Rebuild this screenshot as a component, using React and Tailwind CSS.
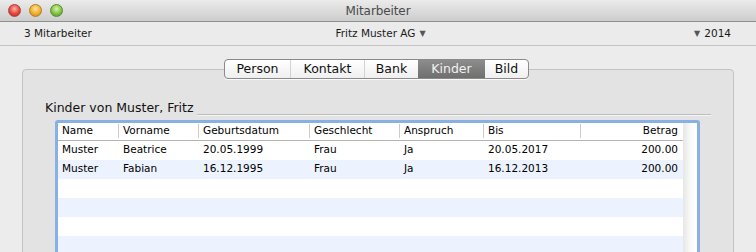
import React from 'react';

const font = { fontFamily: '"DejaVu Sans", "Liberation Sans", sans-serif' };

const columns = [
  { key: 'name', label: 'Name', width: 'w-[60px]' },
  { key: 'vorname', label: 'Vorname', width: 'w-[80px]' },
  { key: 'geburt', label: 'Geburtsdatum', width: 'w-[111px]' },
  { key: 'geschlecht', label: 'Geschlecht', width: 'w-[90px]' },
  { key: 'anspruch', label: 'Anspruch', width: 'w-[84px]' },
  { key: 'bis', label: 'Bis', width: 'w-[97px]' },
  { key: 'betrag', label: 'Betrag', width: 'flex-1', right: true },
];

const kinder = [
  { name: 'Muster', vorname: 'Beatrice', geburt: '20.05.1999', geschlecht: 'Frau', anspruch: 'Ja', bis: '20.05.2017', betrag: '200.00' },
  { name: 'Muster', vorname: 'Fabian', geburt: '16.12.1995', geschlecht: 'Frau', anspruch: 'Ja', bis: '16.12.2013', betrag: '200.00' },
];

const tabs = [
  { label: 'Person', width: 'w-[65px]' },
  { label: 'Kontakt', width: 'w-[74px]' },
  { label: 'Bank', width: 'w-[54px]' },
  { label: 'Kinder', width: 'w-[67px]', active: true },
  { label: 'Bild', width: 'flex-1' },
];

function TrafficLights() {
  return (
    <div className="flex items-center gap-[8px] pl-[8px]">
      <span className="w-[13px] h-[13px] rounded-full border border-[#a8423c] bg-[radial-gradient(circle_at_50%_35%,#ffb0a8,#e5453d_55%,#b7261f)]" />
      <span className="w-[13px] h-[13px] rounded-full border border-[#b07f22] bg-[radial-gradient(circle_at_50%_35%,#ffe6a0,#f0ad2c_55%,#c4801a)]" />
      <span className="w-[13px] h-[13px] rounded-full border border-[#5c8a2e] bg-[radial-gradient(circle_at_50%_35%,#d6f5a8,#80c145_55%,#4d8d22)]" />
    </div>
  );
}

export default function App() {
  return (
    <div className="w-[756px] h-[252px] overflow-hidden bg-[#ececec] flex flex-col" style={font}>
      {/* Title bar */}
      <div className="relative h-[22px] shrink-0 flex items-center bg-gradient-to-b from-[#ebebeb] to-[#cdcdcd] border-b border-[#8f8f8f]">
        <TrafficLights />
        <div className="absolute inset-0 flex items-center justify-center text-[12px] tracking-[-0.1px] text-[#4a4a4a]">
          Mitarbeiter
        </div>
      </div>

      {/* Toolbar */}
      <div className="h-[24px] shrink-0 flex items-center justify-between pl-[24px] pr-[25px] bg-[#ebebeb] border-b border-[#c4c4c4] text-[10.5px] text-[#1a1a1a]">
        <span className="w-[120px]">3 Mitarbeiter</span>
        <span className="flex items-center gap-[4px] pl-[6px]">
          Fritz Muster AG
          <span className="text-[8px] text-[#555]">▼</span>
        </span>
        <span className="w-[120px] flex items-center justify-end gap-[4px]">
          <span className="text-[8px] text-[#555]">▼</span>
          2014
        </span>
      </div>

      {/* Content */}
      <div className="flex-1 flex flex-col pt-[13px] px-[22px]">
        <div className="relative z-10 flex justify-center pr-[3px]">
          <div className="flex w-[305px] h-[20px] rounded-[4px] border border-[#8a8a8a] bg-gradient-to-b from-white to-[#efefef] overflow-hidden text-[12.5px] text-[#111] shadow-[0_1px_0_rgba(255,255,255,0.8)]">
            {tabs.map((t, i) => (
              <div
                key={t.label}
                className={
                  t.active
                    ? `${t.width} flex items-center justify-center bg-gradient-to-b from-[#8d8d8d] to-[#6f6f6f] text-[#f2f2f2]`
                    : `${t.width} flex items-center justify-center ${i > 0 && !tabs[i - 1].active ? 'border-l border-[#d2d2d2]' : ''}`
                }
              >
                {t.label}
              </div>
            ))}
          </div>
        </div>

        <div className="-mt-[10px] flex-1 rounded-[4px] border border-[#c3c3c3] bg-[#e3e3e3] pt-[29px]">
          {/* Group label */}
          <div className="flex items-end ml-[22px] mr-[22px] text-[12.5px] text-[#111]">
            <span>Kinder von Muster, Fritz</span>
            <span className="flex-1 ml-[3px] mb-[3px] border-b border-[#bdbdbd] shadow-[0_1px_0_#f5f5f5]" />
          </div>

          {/* Table */}
          <div className="mt-[2px] ml-[32px] mr-[33px] border-[3px] border-[#88b0e3] rounded-[3px] bg-white flex">
            <div className="flex-1 flex flex-col text-[10.5px] text-black">
              <div className="flex h-[18px] border-b border-[#b5b5b5] bg-white">
                {columns.map((c, i) => (
                  <div key={c.key} className={`${c.width} flex items-center`}>
                    {i > 0 && <span className="w-px h-[14px] bg-[#cbcbcb]" />}
                    <span className={c.right ? 'flex-1 text-right pr-[5px]' : 'pl-[4px]'}>{c.label}</span>
                  </div>
                ))}
              </div>
              {[0, 1, 2, 3, 4, 5].map((r) => {
                const row = kinder[r];
                return (
                  <div key={r} className={`flex h-[19px] ${r % 2 === 1 ? 'bg-[#edf3fe]' : 'bg-white'}`}>
                    {row &&
                      columns.map((c, i) => (
                        <div
                          key={c.key}
                          className={`${c.width} flex items-center ${c.right ? 'justify-end pr-[5px]' : i > 0 ? 'pl-[5px]' : 'pl-[4px]'}`}
                        >
                          {row[c.key]}
                        </div>
                      ))}
                  </div>
                );
              })}
            </div>
            <div className="w-[14px] bg-gradient-to-r from-[#e6e6e6] via-[#f8f8f8] to-white" />
          </div>
        </div>
      </div>
    </div>
  );
}
